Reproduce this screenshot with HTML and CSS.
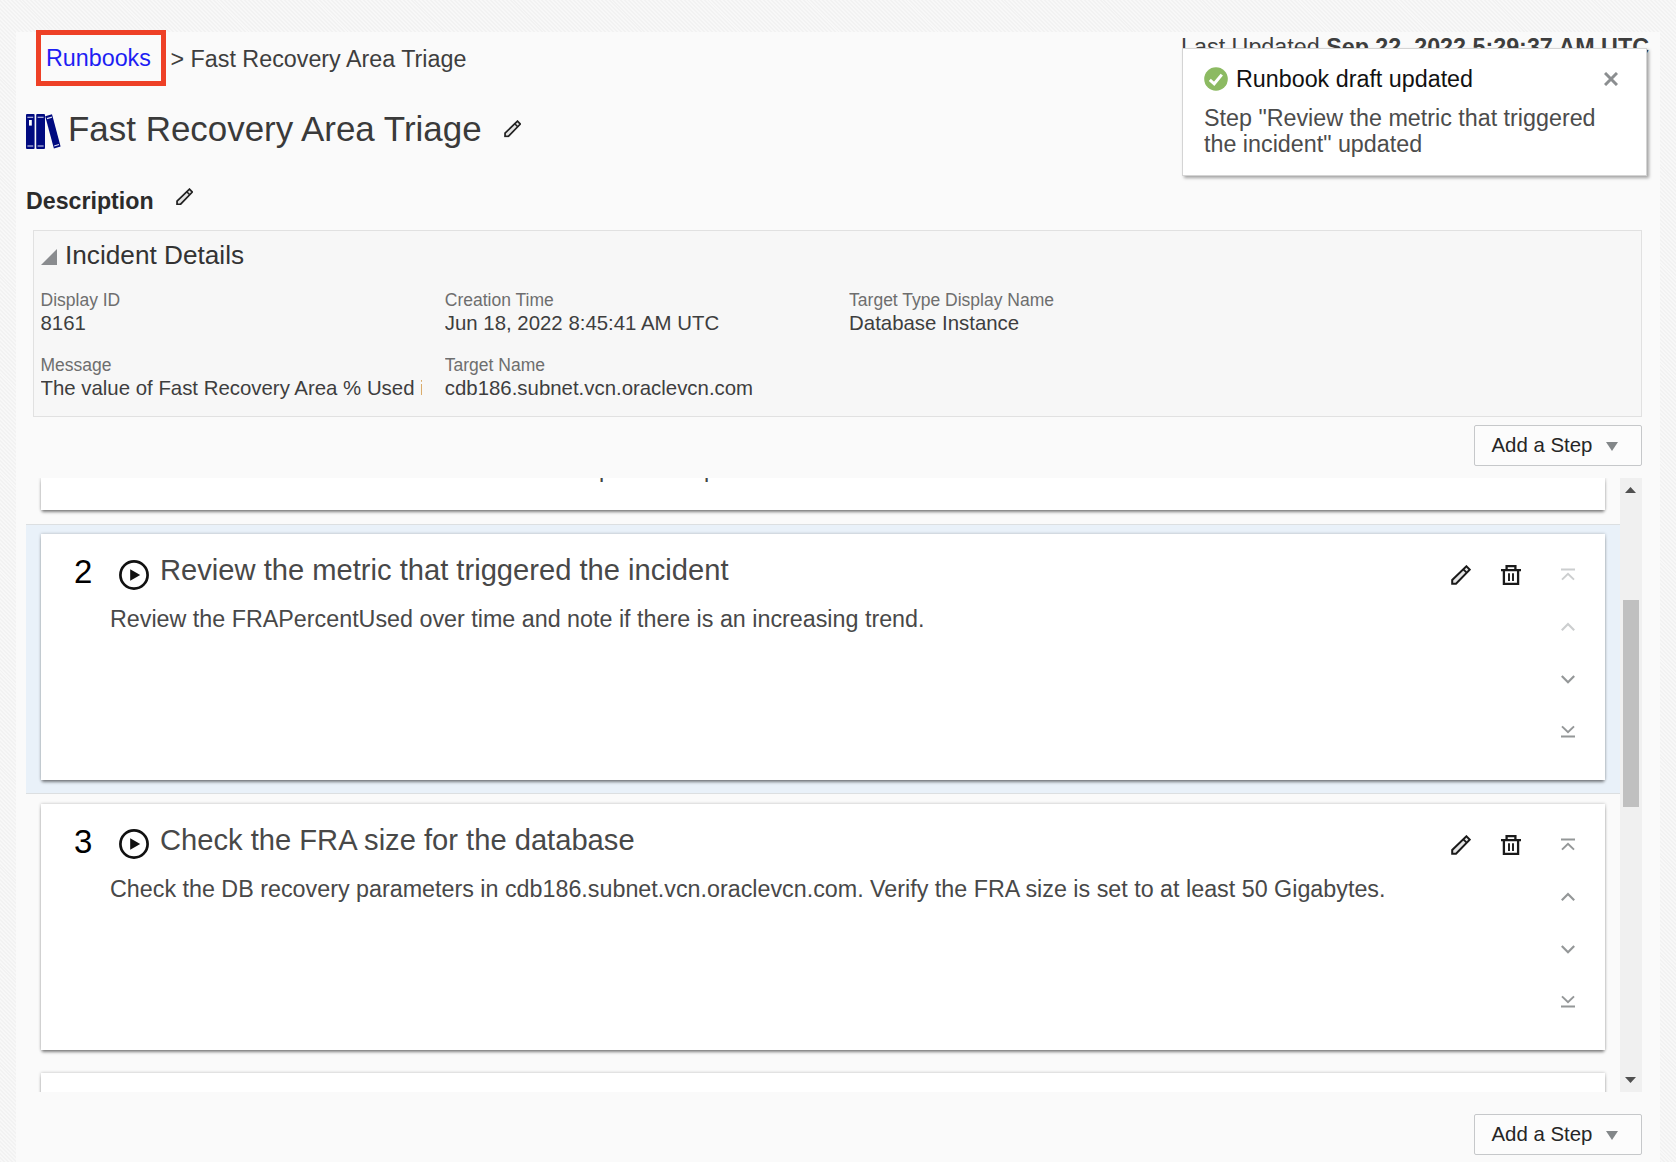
FILE: index.html
```html
<!DOCTYPE html>
<html lang="en">
<head>
<meta charset="utf-8">
<title>Fast Recovery Area Triage</title>
<link rel="stylesheet" href="styles.css">
</head>
<body>
<svg class="defs" width="0" height="0">
  <symbol id="pencil" viewBox="0 0 20 20">
    <path d="M1.2 18.8V15L15.4 1.3L18.7 4.6L5 18.8Z" fill="#e4e4e4" stroke="currentColor" stroke-width="2"/>
    <path d="M12.3 4.3L15.7 7.7" fill="none" stroke="currentColor" stroke-width="1.8"/>
  </symbol>
  <symbol id="trash" viewBox="0 0 20 20">
    <path d="M0 5.2H20 M5.6 5V1.2H14.4V5 M2.9 5.5V18.8H17.1V5.5" fill="none" stroke="currentColor" stroke-width="2.3"/>
    <path d="M8 8.2V16 M12 8.2V16" fill="none" stroke="currentColor" stroke-width="1.9"/>
  </symbol>
  <symbol id="play" viewBox="0 0 30 30">
    <circle cx="15" cy="15" r="13.6" fill="none" stroke="currentColor" stroke-width="2.7"/>
    <path d="M11.2 9.3L21.2 15L11.2 20.7Z" fill="currentColor"/>
  </symbol>
  <symbol id="first" viewBox="0 0 14 14"><path d="M0 1.4H14 M1 11.6L7 5.8L13 11.6" fill="none" stroke="currentColor" stroke-width="2"/></symbol>
  <symbol id="up" viewBox="0 0 14 14"><path d="M.8 10.2L7 4L13.2 10.2" fill="none" stroke="currentColor" stroke-width="2.2"/></symbol>
  <symbol id="down" viewBox="0 0 14 14"><path d="M.8 4L7 10.2L13.2 4" fill="none" stroke="currentColor" stroke-width="2.2"/></symbol>
  <symbol id="last" viewBox="0 0 14 14"><path d="M0 12.6H14 M1 2.4L7 8.2L13 2.4" fill="none" stroke="currentColor" stroke-width="2"/></symbol>
</svg>

<main class="page">
  <header class="top">
    <nav class="crumbs">
      <a class="crumb-link">Runbooks</a>
      <span class="crumb-here">&gt; Fast Recovery Area Triage</span>
    </nav>
    <div class="updated">Last Updated <b>Sep 22, 2022 5:29:37 AM UTC</b></div>
  </header>

  <div class="title-row">
    <svg class="books" viewBox="0 0 35 35">
      <rect x="0" y="0" width="8.6" height="35" rx="1" fill="#000a80"/>
      <rect x="10.2" y="0" width="8.8" height="35" rx="1" fill="#000a80"/>
      <path d="M19.2 2.2L26 .3L34.6 32.4L27.9 34.6Z" fill="#000a80"/>
      <path d="M1.4 3.3H7.2 M1.4 32H7.2 M11.6 3.3H17.6 M11.6 32H17.6 M21 4.6L25.9 3.1 M28.2 32L33 30.4" stroke="#dfe1f4" stroke-width="1.1"/>
      <rect x="3" y="6" width="2.8" height="5.6" fill="#fff"/>
    </svg>
    <h1 class="title">Fast Recovery Area Triage</h1>
    <svg class="edit-title"><use href="#pencil"/></svg>
  </div>

  <div class="desc-row">
    <h2 class="desc">Description</h2>
    <svg class="edit-desc"><use href="#pencil"/></svg>
  </div>

  <section class="incident">
    <div class="incident-head">
      <svg class="disclose" viewBox="0 0 16 16"><path d="M16 0V16H0Z" fill="#8a8c8f"/></svg>
      <h3 class="incident-title">Incident Details</h3>
    </div>
    <dl class="fields">
      <div class="field"><dt>Display ID</dt><dd>8161</dd></div>
      <div class="field"><dt>Creation Time</dt><dd>Jun 18, 2022 8:45:41 AM UTC</dd></div>
      <div class="field"><dt>Target Type Display Name</dt><dd>Database Instance</dd></div>
      <div class="field"><dt>Message</dt><dd>The value of Fast Recovery Area % Used is</dd></div>
      <div class="field"><dt>Target Name</dt><dd>cdb186.subnet.vcn.oraclevcn.com</dd></div>
    </dl>
  </section>

  <div class="actions">
    <button class="add"><span>Add a Step</span><svg class="caret" viewBox="0 0 12 9"><path d="M0 0H12L6 9Z" fill="#838789"/></svg></button>
  </div>

  <section class="steps">
    <div class="list">
      <div class="row row-cut"><div class="card card-cut"><span class="tail">p</span><span class="tail">p</span></div></div>

      <div class="row row-active">
        <article class="card">
          <div class="num">2</div>
          <div class="content">
            <div class="step-head"><svg class="play"><use href="#play"/></svg><h4 class="step-title">Review the metric that triggered the incident</h4></div>
            <p class="step-text">Review the FRAPercentUsed over time and note if there is an increasing trend.</p>
          </div>
          <div class="tools"><svg class="tool"><use href="#pencil"/></svg><svg class="tool"><use href="#trash"/></svg></div>
          <div class="moves">
            <svg class="move off"><use href="#first"/></svg><svg class="move off"><use href="#up"/></svg><svg class="move"><use href="#down"/></svg><svg class="move"><use href="#last"/></svg>
          </div>
        </article>
      </div>

      <div class="row">
        <article class="card">
          <div class="num">3</div>
          <div class="content">
            <div class="step-head"><svg class="play"><use href="#play"/></svg><h4 class="step-title">Check the FRA size for the database</h4></div>
            <p class="step-text">Check the DB recovery parameters in cdb186.subnet.vcn.oraclevcn.com. Verify the FRA size is set to at least 50 Gigabytes.</p>
          </div>
          <div class="tools"><svg class="tool"><use href="#pencil"/></svg><svg class="tool"><use href="#trash"/></svg></div>
          <div class="moves">
            <svg class="move"><use href="#first"/></svg><svg class="move"><use href="#up"/></svg><svg class="move"><use href="#down"/></svg><svg class="move"><use href="#last"/></svg>
          </div>
        </article>
      </div>

      <div class="row"><article class="card"></article></div>
    </div>
    <div class="scrollbar">
      <svg class="arrow" viewBox="0 0 11 6"><path d="M0 6L5.5 0L11 6Z" fill="#505050"/></svg>
      <div class="thumb"></div>
      <svg class="arrow arrow-down" viewBox="0 0 11 6"><path d="M0 0H11L5.5 6Z" fill="#505050"/></svg>
    </div>
  </section>

  <div class="actions actions-bottom">
    <button class="add"><span>Add a Step</span><svg class="caret" viewBox="0 0 12 9"><path d="M0 0H12L6 9Z" fill="#838789"/></svg></button>
  </div>
</main>

<aside class="toast">
  <div class="toast-head">
    <svg class="ok" viewBox="0 0 24 24"><circle cx="12" cy="12" r="11.8" fill="#8cba62"/><path d="M5.8 12.8L10.2 16.8L17.8 7.6" fill="none" stroke="#fff" stroke-width="3"/></svg>
    <strong class="toast-title">Runbook draft updated</strong>
    <svg class="close" viewBox="0 0 14 14"><path d="M1 1L13 13M13 1L1 13" stroke="#8b8e90" stroke-width="3"/></svg>
  </div>
  <p class="toast-body">Step "Review the metric that triggered<br>the incident" updated</p>
</aside>
</body>
</html>
```
FILE: styles.css
```css
* { box-sizing: border-box; }
body {
  margin: 0;
  height: 1162px;
  overflow: hidden;
  background: repeating-linear-gradient(45deg, #f2f2f2 0 1.4px, #f8f8f8 1.4px 2.8px);
  color: #3e3e3e;
  font: 23.3px/1 "Liberation Sans", Arial, sans-serif;
  white-space: nowrap;
}
svg { display: block; flex: none; }
.defs { position: absolute; }
h1, h2, h3, h4, p, dl, dd { margin: 0; font-weight: normal; }

.page {
  height: 1130px;
  margin: 32px 16px 0;
  padding: 0 18px 0 10px;
  background: #fafafa;
}

.top { display: flex; justify-content: space-between; height: 54px; }
.crumbs { display: flex; margin: -2px 0 0 10px; }
.crumb-link {
  width: 130px;
  height: 56px;
  padding-left: 5px;
  border: 5px solid #ee4026;
  color: #1e1ef3;
  line-height: 46px;
}
.crumb-here { margin-left: 4.5px; line-height: 59px; }
.updated { margin-right: -7px; line-height: 30px; }

.title-row { display: flex; align-items: center; height: 50px; margin-top: 18px; color: #3a3a3a; }
.books { width: 35px; height: 35px; margin-top: 5px; }
.title { margin-left: 7px; font-size: 34.95px; line-height: 52px; }
.edit-title { width: 17.5px; height: 17.5px; margin: 0 0 0 22px; color: #222; }

.desc-row { display: flex; height: 30px; margin-top: 32px; color: #2b2b2b; }
.desc { font-size: 23.2px; font-weight: bold; line-height: 30px; }
.edit-desc { width: 17.5px; height: 17.5px; margin: 1.5px 0 0 22px; color: #222; }

.incident {
  height: 187px;
  margin: 14px 0 0 7px;
  padding: 0 7px;
  border: 1px solid #e1e1e1;
  background: #f7f7f7;
}
.incident-head { display: flex; align-items: center; height: 48px; color: #333; }
.disclose { width: 16px; height: 16px; margin-top: 3px; }
.incident-title { margin-left: 8px; font-size: 26.2px; line-height: 48px; }
.fields { display: grid; grid-template-columns: 404.3px 404.3px 404.3px; gap: 19px 0; margin: 10px 0 0 -.5px; }
.field { width: 381.5px; overflow: hidden; }
dt { color: #6e6e6e; font-size: 17.5px; line-height: 23px; }
dd { color: #3e3e3e; font-size: 20.4px; line-height: 23px; }

.actions { display: flex; justify-content: flex-end; margin-top: 8px; }
.actions-bottom { margin-top: 22px; }
.add {
  display: flex;
  align-items: center;
  width: 168px;
  height: 41px;
  padding: 0 0 0 16.5px;
  border: 1px solid #c6c8ca;
  border-radius: 2px;
  background: #fcfcfc;
  color: #262626;
  font: 20.4px/39px "Liberation Sans", Arial, sans-serif;
}
.caret { width: 12px; height: 9px; margin: 2px 0 0 13.5px; }

.steps { display: flex; height: 614px; margin-top: 12px; overflow: hidden; }
.list { width: 1594px; }
.row { height: 269.5px; padding: 10px 15px 0; }
.row-cut { height: 46px; padding-top: 0; }
.row-active { padding-top: 9px; border: solid #dcdfe1; border-width: 1px 0; background: #e9f1f9; }
.card {
  display: flex;
  height: 246px;
  background: #fff;
  box-shadow: 0 0 3px rgba(0, 0, 0, .25), 0 3px 3px -1px rgba(0, 0, 0, .45);
}
.card-cut { height: 32px; }
.tail { margin: -19px 0 0 558px; line-height: 20px; height: 30px; color: #444; }
.tail + .tail { margin-left: 92px; }

.num { width: 69px; padding-left: 33px; color: #000; font-size: 33px; line-height: 76px; }
.content { width: 1300px; }
.step-head { display: flex; height: 68px; }
.play { width: 30px; height: 30px; margin: 25.5px 0 0 9px; color: #111; }
.step-title { margin-left: 11px; color: #484848; font-size: 29.15px; line-height: 73px; }
.step-text { color: #484848; line-height: 34px; }
.tools { display: flex; gap: 30px; width: 110px; margin-left: 40.5px; padding-top: 31px; color: #1a1a1a; }
.tool { width: 20px; height: 20px; }
.moves { padding-top: 34px; color: #949798; }
.move { width: 14px; height: 14px; margin-bottom: 38px; }
.off { color: #cccecf; }

.scrollbar { width: 22px; padding-top: 9px; background: #f0f0f0; }
.arrow { width: 11px; height: 6px; margin-left: 5px; }
.thumb { width: 16px; height: 207px; margin: 106.5px 0 0 3px; background: #c0c0c0; }
.arrow-down { margin-top: 270.5px; }

.toast {
  position: absolute;
  left: 1182px;
  top: 48px;
  width: 465px;
  height: 128px;
  padding: 18px 21px;
  border: 1px solid #d4d4d4;
  background: #fff;
  box-shadow: 2px 2px 3px rgba(0, 0, 0, .35);
}
.toast-head { display: flex; align-items: center; height: 24px; }
.ok { width: 24px; height: 24px; }
.toast-title { margin-left: 8px; color: #111; font-weight: normal; line-height: 23px; }
.close { width: 14px; height: 14px; margin: 0 7px 0 auto; }
.toast-body { margin-top: 14px; color: #4c4c4c; line-height: 26px; }
```
